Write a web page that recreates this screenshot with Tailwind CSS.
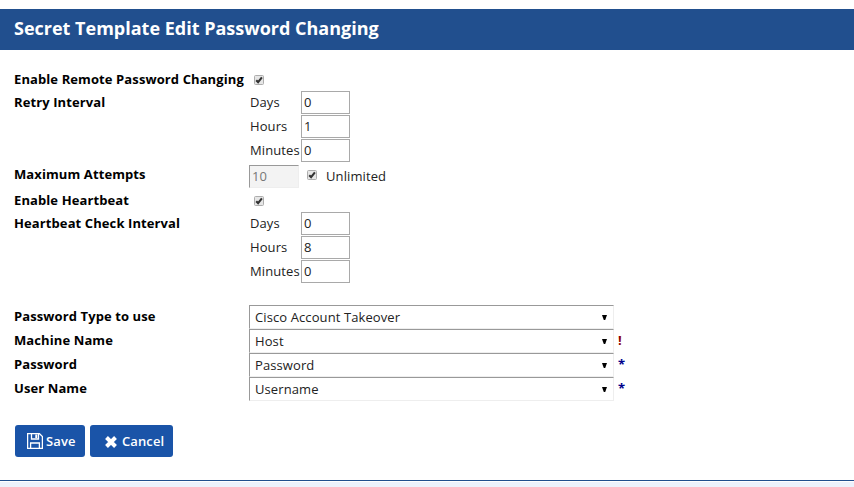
<!DOCTYPE html>
<html lang="en">
<head>
<meta charset="utf-8">
<title>Secret Template Edit Password Changing</title>
<script src="https://cdn.jsdelivr.net/npm/@tailwindcss/browser@4"></script>
</head>
<body class="bg-white">
<svg class="hidden">
  <symbol id="check" viewBox="0 0 10 10">
    <rect x=".5" y=".5" width="9" height="9" rx="1" fill="#e6e6e6" stroke="#adadad"/>
    <path d="M2.2 5.2L4.1 7.1L7.9 2.4" fill="none" stroke="#333" stroke-width="2.1"/>
  </symbol>
  <symbol id="arrow" viewBox="0 0 5 5"><path d="M0 0H5L3.2 5H1.8Z" fill="#000"/></symbol>
</svg>
<div class="flex h-[487px] w-[854px] flex-col overflow-hidden whitespace-nowrap bg-white font-['Open_Sans',sans-serif] text-[13px] leading-[22px] tracking-[0.1px] text-[#222]">
  <header class="mt-[9px] flex h-[41px] shrink-0 items-center bg-[#214f8e] pb-[3px] pl-[14px]">
    <h1 class="text-[18px] font-bold tracking-normal text-white">Secret Template Edit Password Changing</h1>
  </header>

  <main class="flex h-[431px] shrink-0 flex-col border-b border-[#214f8e] pl-[14px] pt-[19px]">
    <section class="grid grid-cols-[235px_auto] grid-rows-[22px_72px_27px_22px_72px]">
      <div class="font-bold leading-[20px] text-black">Enable Remote Password Changing</div>
      <div class="pl-[5px] pt-[6px]"><svg class="size-[10px]"><use href="#check"/></svg></div>

      <div class="font-bold text-black">Retry Interval</div>
      <div class="grid grid-cols-[51px_49px] grid-rows-[24px_24px_24px] pl-px">
        <span>Days</span><input class="h-[23px] w-[49px] border border-[#a9a9a9] px-[2px] pb-px" value="0">
        <span>Hours</span><input class="h-[23px] w-[49px] border border-[#a9a9a9] px-[2px] pb-px" value="1">
        <span>Minutes</span><input class="h-[23px] w-[49px] border border-[#a9a9a9] px-[2px] pb-px" value="0">
      </div>

      <div class="font-bold text-black">Maximum Attempts</div>
      <div class="flex items-start pt-[2px]">
        <input disabled class="h-[23px] w-[50px] border border-b-[#eee] border-l-[#999] border-r-[#eee] border-t-[#999] bg-[#f3f3f3] px-[2px] pb-px text-[#777]" value="10">
        <svg class="ml-[8px] mt-[5px] size-[10px]"><use href="#check"/></svg>
        <span class="ml-[9px]">Unlimited</span>
      </div>

      <div class="font-bold leading-[20px] text-black">Enable Heartbeat</div>
      <div class="pl-[5px] pt-[6px]"><svg class="size-[10px]"><use href="#check"/></svg></div>

      <div class="font-bold text-black">Heartbeat Check Interval</div>
      <div class="grid grid-cols-[51px_49px] grid-rows-[24px_24px_24px] pl-px">
        <span>Days</span><input class="h-[23px] w-[49px] border border-[#a9a9a9] px-[2px] pb-px" value="0">
        <span>Hours</span><input class="h-[23px] w-[49px] border border-[#a9a9a9] px-[2px] pb-px" value="8">
        <span>Minutes</span><input class="h-[23px] w-[49px] border border-[#a9a9a9] px-[2px] pb-px" value="0">
      </div>
    </section>

    <section class="mt-[21px] grid grid-cols-[235px_365px_auto] grid-rows-[24px_24px_24px_24px]">
      <div class="font-bold text-black">Password Type to use</div>
      <div class="flex items-center justify-between border border-b-[#eee] border-l-[#999] border-r-[#eee] border-t-[#999] pl-[5px] pr-[6px]"><span>Cisco Account Takeover</span><svg class="size-[5px]"><use href="#arrow"/></svg></div>
      <div></div>
      <div class="font-bold text-black">Machine Name</div>
      <div class="flex items-center justify-between border border-b-[#eee] border-l-[#999] border-r-[#eee] border-t-[#999] pl-[5px] pr-[6px]"><span>Host</span><svg class="size-[5px]"><use href="#arrow"/></svg></div>
      <div class="pl-[4px] font-bold text-[#8b0000]">!</div>
      <div class="font-bold text-black">Password</div>
      <div class="flex items-center justify-between border border-b-[#eee] border-l-[#999] border-r-[#eee] border-t-[#999] pl-[5px] pr-[6px]"><span>Password</span><svg class="size-[5px]"><use href="#arrow"/></svg></div>
      <div class="pl-[4px] font-bold text-[#00008b]">*</div>
      <div class="font-bold text-black">User Name</div>
      <div class="flex items-center justify-between border border-b-[#eee] border-l-[#999] border-r-[#eee] border-t-[#999] pl-[5px] pr-[6px]"><span>Username</span><svg class="size-[5px]"><use href="#arrow"/></svg></div>
      <div class="pl-[4px] font-bold text-[#00008b]">*</div>
    </section>

    <div class="mt-[24px] flex gap-[5px] pl-px font-semibold text-white">
      <button class="flex h-[32px] w-[70px] items-center rounded-[3px] bg-[#1a54a8] pl-[12px]">
        <svg class="mr-[3px] size-[16px] shrink-0" viewBox="0 0 16 16" fill="none" stroke="#fff" stroke-width="1.3"><path d="M.6.6H12.4L15.4 3.6V15.4H.6ZM4.5.6V6H11.5V.6M3.6 15.4V10H12.4V15.4"/><path d="M9.3 1.5V5" stroke-width="2"/></svg>
        <span>Save</span>
      </button>
      <button class="flex h-[32px] w-[83px] items-center rounded-[3px] bg-[#1a54a8] pl-[15px]">
        <svg class="mr-[5px] mt-[2px] size-[12px] shrink-0" viewBox="0 0 12 12" fill="none" stroke="#fff" stroke-width="4" stroke-linejoin="round"><path d="M1.5 1.5L10.5 10.5M10.5 1.5L1.5 10.5"/></svg>
        <span>Cancel</span>
      </button>
    </div>
  </main>
  <footer class="mt-px flex-1 bg-[#edf2fc]"></footer>
</div>
</body>
</html>
